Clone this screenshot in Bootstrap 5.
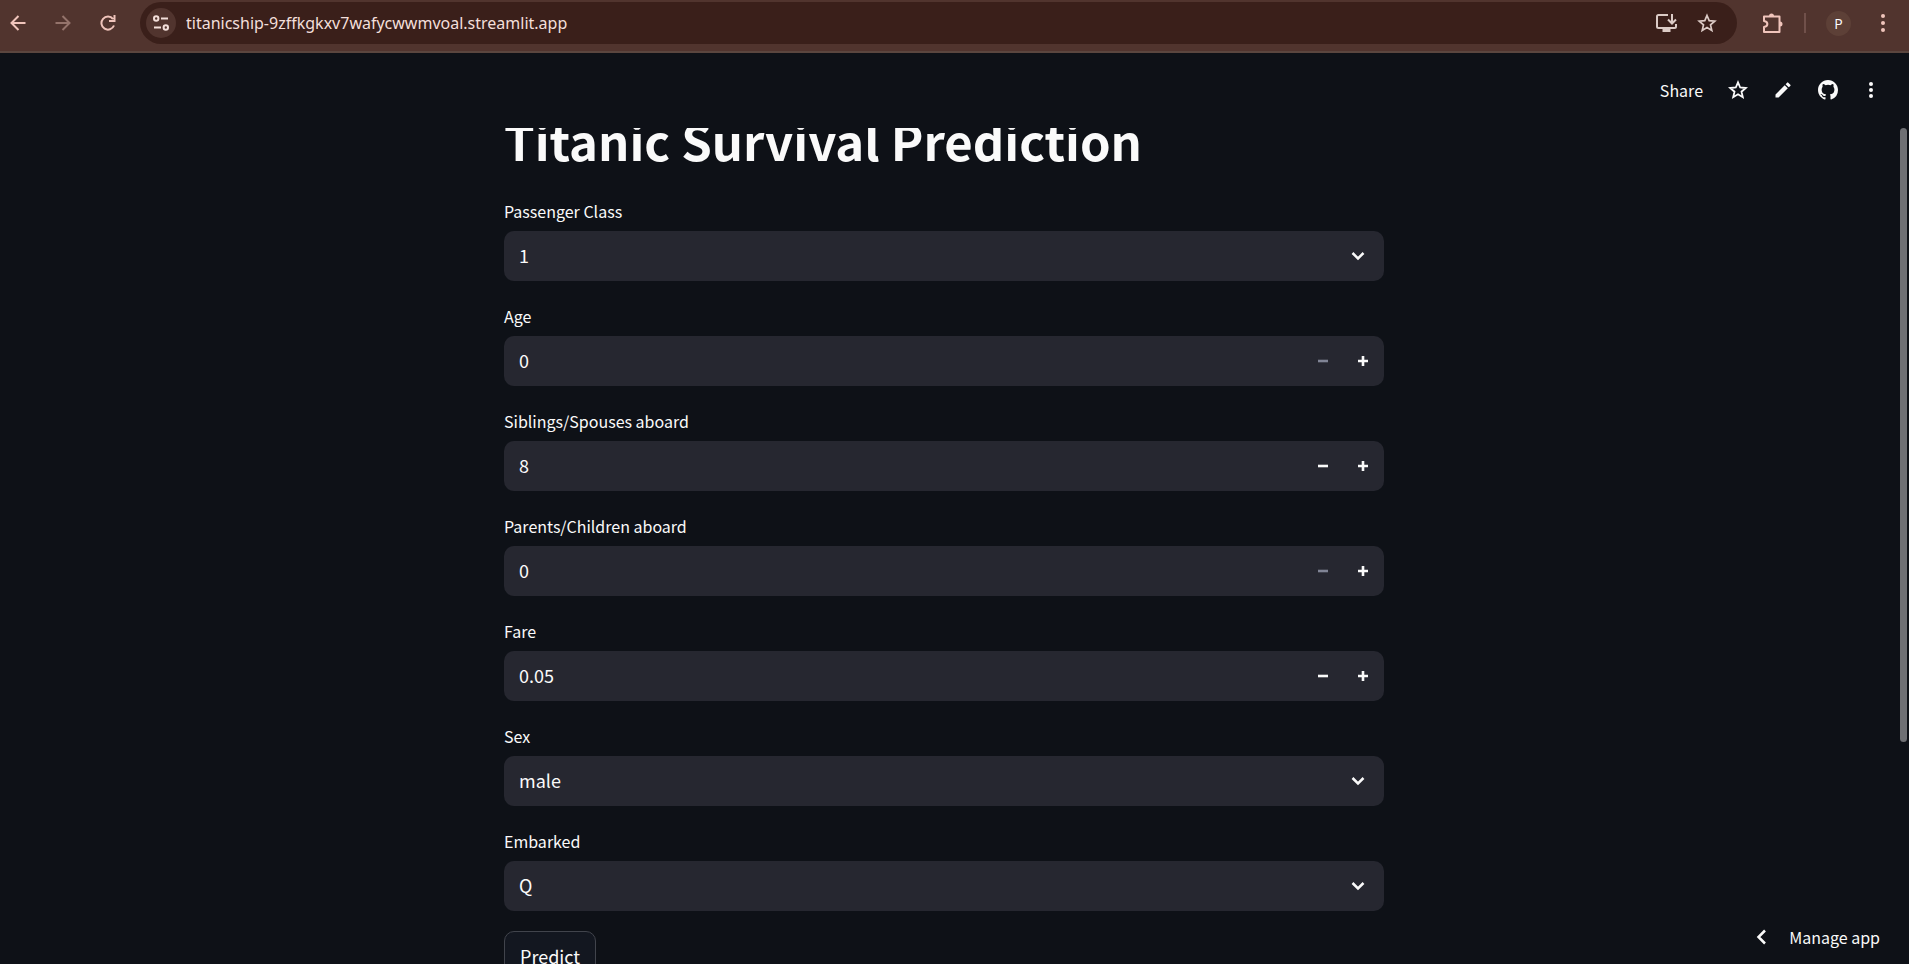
<!DOCTYPE html>
<html lang="en">
<head>
<meta charset="utf-8">
<meta name="viewport" content="width=device-width, initial-scale=1">
<title>Titanic Survival Prediction</title>
<link href="https://cdn.jsdelivr.net/npm/bootstrap@5.3.0/dist/css/bootstrap.min.css" rel="stylesheet">
<style>
  :root { --ink: #fafafa; --page: #0e1117; --field: #262730; --chrome: #51342e; --chrome-ink: #f0c4bb; }
  body { background: var(--page); color: var(--ink); font-family: "Noto Sans CJK SC", "Noto Sans", sans-serif; font-size: 16px; }
  svg { display: block; flex: none; }
  button { color: inherit; }
  .plain-btn { background: none; border: 0; padding: 0; display: flex; align-items: center; justify-content: center; }

  .browser-bar { background: var(--chrome); color: var(--chrome-ink); height: 53px; border-bottom: 2px solid #5b463f; padding: 2px 16px 7px 0; }
  .nav-btn { width: 45px; height: 42px; }
  .nav-btns { padding-right: 10px; margin-left: -5px; }
  .nav-btn:disabled { color: #94736b; }
  .omnibox { background: #3a1f1a; border-radius: 21px; padding: 0 20px 0 6px; height: 42px; color: #dccbc6; }
  .site-info { width: 30px; height: 30px; border-radius: 50%; background: var(--chrome); }
  .address { background: none; border: 0; outline: 0; color: #f3dfda; font-family: "Noto Sans", "Open Sans", sans-serif; font-size: 16px; line-height: 24px; padding: 0; margin-left: 10px; min-width: 0; }
  .box-actions { gap: 20px; }
  .browser-tools { padding-left: 25px; }
  .tool-rule { width: 2px; height: 20px; background: #70504a; margin: 0 20px 0 21px; }
  .profile { width: 25px; height: 25px; border-radius: 50%; background: #5d4037; color: #fff; font-family: "Open Sans", sans-serif; font-size: 14px; line-height: 25px; margin-right: 22px; }

  .app-bar { height: 75px; padding: 0 30px 2px; gap: 25px; }
  .app-bar .share { line-height: 24px; }

  .scroll-area { overflow: hidden; min-height: 0; padding-right: 21px; }
  .form-column { max-width: 880px; margin-top: -20px; gap: 20px; }
  h1 { font-size: 49px; font-weight: 700; line-height: 64px; margin: 0 0 4px; }
  .field-label { font-size: 16px; line-height: 30px; margin-bottom: 5px; }
  .field-box { background: var(--field); border-radius: 10px; height: 50px; padding-right: 1px; }
  .field-box input, .field-box select { background: none; border: 0; outline: 0; color: var(--ink); font-size: 18px; line-height: 30px; padding: 0 0 2px 15px; height: 50px; width: 100%; min-width: 0; appearance: none; }
  .field-box option { background: var(--field); }
  .step { width: 40px; height: 50px; flex: none; }
  .step:disabled { color: #808495; }
  .chevron { right: 18px; top: 50%; margin-top: -8px; pointer-events: none; }
  .predict { border: 1px solid #41444c; border-radius: 10px; background: #131720; color: var(--ink); font-size: 18px; line-height: 30px; padding: 9px 15px; }
  .thumb { top: 0; right: 2px; width: 7px; height: 73.5%; border-radius: 4px; background: #6f7074; }
  .manage { right: 29px; bottom: 15px; gap: 20px; line-height: 24px; }
</style>
</head>
<body>
<div class="d-flex flex-column vh-100 overflow-hidden">
  <header class="browser-bar d-flex align-items-center flex-shrink-0">
    <div class="nav-btns d-flex">
      <button class="plain-btn nav-btn" aria-label="Back"><svg width="16" height="16" viewBox="0 0 16 16" fill="none" stroke="currentColor" stroke-width="2"><path d="M15.500 8H2M8.500 1 1.500 8l7 7"/></svg></button>
      <button class="plain-btn nav-btn" aria-label="Forward" disabled><svg width="16" height="16" viewBox="0 0 16 16" fill="none" stroke="currentColor" stroke-width="2"><path d="M.5 8h14M7.500 1l7 7-7 7"/></svg></button>
      <button class="plain-btn nav-btn" aria-label="Reload"><svg width="16" height="16" viewBox="0 0 16 16" fill="none" stroke="currentColor" stroke-width="2"><path d="M14 10.500A6.500 6.500 0 1 1 13 4M14.500 0v6H9"/></svg></button>
    </div>
    <div class="omnibox d-flex align-items-center flex-grow-1">
      <button class="plain-btn site-info" aria-label="Site information"><svg width="16" height="16" viewBox="0 0 16 16" fill="none" stroke="#f3dfda" stroke-width="2"><circle cx="3.200" cy="3.500" r="2.200"/><path d="M8 3.500h7M1 12.500h7"/><circle cx="12.800" cy="12.500" r="2.200"/></svg></button>
      <input class="address flex-grow-1" type="text" aria-label="Address" value="titanicship-9zffkgkxv7wafycwwmvoal.streamlit.app">
      <div class="box-actions d-flex align-items-center">
        <button class="plain-btn" aria-label="Install app"><svg width="21" height="20" viewBox="0 0 21 20" fill="none" stroke="currentColor" stroke-width="2"><path d="M12 2H2.500Q1 2 1 3.500v10Q1 15 2.500 15h16q1.500 0 1.500-1.500V11M16 1v9M12 6.500l4 4 4-4"/><path d="M6.500 16h8v3h-8z" fill="currentColor" stroke="none"/></svg></button>
        <button class="plain-btn" aria-label="Bookmark"><svg width="20" height="20" viewBox="0 0 20 20" fill="none" stroke="currentColor" stroke-width="1.700"><path d="m10 2.500 2.200 5.200 5.600.500-4.300 3.700 1.300 5.500-4.800-2.900-4.800 2.900 1.300-5.500L2.200 8.200l5.600-.500z"/></svg></button>
      </div>
    </div>
    <div class="browser-tools d-flex align-items-center">
      <button class="plain-btn" aria-label="Extensions"><svg width="21" height="21" viewBox="0 0 21 21" fill="none" stroke="currentColor" stroke-width="2"><path d="M2 3.500h15.500v15.500H2v-5c4.500-.500 4.500-5.500 0-6z" stroke-linejoin="round"/><path d="M7 3a2.500 2.500 0 0 1 5 0zM18 8.500a2.500 2.500 0 0 1 0 5z" fill="currentColor" stroke="none"/></svg></button>
      <span class="tool-rule"></span>
      <button class="plain-btn profile" aria-label="Profile P">P</button>
      <button class="plain-btn" aria-label="Browser menu"><svg width="20" height="20" viewBox="0 0 20 20" fill="currentColor"><circle cx="10" cy="3" r="2"/><circle cx="10" cy="10" r="2"/><circle cx="10" cy="17" r="2"/></svg></button>
    </div>
  </header>

  <nav class="app-bar d-flex align-items-center justify-content-end flex-shrink-0" aria-label="App toolbar">
    <button class="plain-btn share">Share</button>
    <button class="plain-btn" aria-label="Favorite"><svg width="20" height="20" viewBox="0 0 20 20" fill="none" stroke="currentColor" stroke-width="1.800"><path d="m10 2.300 2.200 5.200 5.600.500-4.300 3.700 1.300 5.500-4.800-2.900-4.800 2.900 1.300-5.500L2.200 8l5.600-.500z"/></svg></button>
    <button class="plain-btn" aria-label="Edit source"><svg width="20" height="20" viewBox="0 0 20 20" fill="currentColor"><path d="M2.500 14.400v3.100h3.100l9.200-9.200-3.100-3.100zM17.300 5.900a.8.8 0 0 0 0-1.200l-2-2a.8.8 0 0 0-1.200 0l-1.500 1.500 3.100 3.100z"/></svg></button>
    <button class="plain-btn" aria-label="View on GitHub"><svg width="20" height="20" viewBox="0 0 16 16" fill="currentColor"><path d="M8 0C3.580 0 0 3.580 0 8c0 3.540 2.290 6.530 5.470 7.590.4.070.55-.17.55-.38 0-.19-.01-.82-.01-1.490-2.010.37-2.530-.49-2.690-.94-.09-.23-.48-.94-.82-1.130-.28-.15-.68-.52-.01-.53.63-.01 1.080.58 1.230.82.72 1.210 1.870.87 2.330.66.07-.52.28-.87.51-1.070-1.780-.2-3.640-.89-3.640-3.950 0-.87.31-1.590.82-2.150-.08-.2-.36-1.020.08-2.120 0 0 .67-.21 2.200.82a7.600 7.600 0 0 1 4 0c1.530-1.040 2.200-.82 2.200-.82.44 1.100.16 1.920.08 2.120.51.56.82 1.270.82 2.150 0 3.070-1.870 3.750-3.650 3.950.29.25.54.73.54 1.480 0 1.070-.01 1.930-.01 2.200 0 .21.15.46.55.38A8.010 8.010 0 0 0 16 8c0-4.420-3.580-8-8-8"/></svg></button>
    <button class="plain-btn" aria-label="Main menu"><svg width="16" height="20" viewBox="0 0 16 20" fill="currentColor"><circle cx="8" cy="4" r="2"/><circle cx="8" cy="10" r="2"/><circle cx="8" cy="16" r="2"/></svg></button>
  </nav>

  <div class="position-relative d-flex flex-column flex-grow-1 overflow-hidden">
    <main class="scroll-area flex-grow-1">
      <form class="form-column d-flex flex-column mx-auto">
        <h1>Titanic Survival Prediction</h1>
        <div>
          <label class="field-label d-block" for="pclass">Passenger Class</label>
          <div class="field-box position-relative"><select id="pclass"><option>1</option><option>2</option><option>3</option></select>
            <svg class="chevron position-absolute" width="16" height="16" viewBox="0 0 16 16" fill="none" stroke="currentColor" stroke-width="2.500"><path d="m2.500 5 5.500 5.500L13.500 5"/></svg></div>
        </div>
        <div>
          <label class="field-label d-block" for="age">Age</label>
          <div class="field-box d-flex"><input id="age" type="text" inputmode="numeric" value="0">
            <button type="button" class="plain-btn step" aria-label="Decrease age" disabled><svg width="10" height="10" viewBox="0 0 10 10"><path fill="currentColor" d="M0 3.700h10v2.600H0z"/></svg></button>
            <button type="button" class="plain-btn step" aria-label="Increase age"><svg width="10" height="10" viewBox="0 0 10 10"><path fill="currentColor" d="M0 3.700h3.700V0h2.600v3.700H10v2.600H6.300V10H3.700V6.300H0z"/></svg></button></div>
        </div>
        <div>
          <label class="field-label d-block" for="sibsp">Siblings/Spouses aboard</label>
          <div class="field-box d-flex"><input id="sibsp" type="text" inputmode="numeric" value="8">
            <button type="button" class="plain-btn step" aria-label="Decrease siblings"><svg width="10" height="10" viewBox="0 0 10 10"><path fill="currentColor" d="M0 3.700h10v2.600H0z"/></svg></button>
            <button type="button" class="plain-btn step" aria-label="Increase siblings"><svg width="10" height="10" viewBox="0 0 10 10"><path fill="currentColor" d="M0 3.700h3.700V0h2.600v3.700H10v2.600H6.300V10H3.700V6.300H0z"/></svg></button></div>
        </div>
        <div>
          <label class="field-label d-block" for="parch">Parents/Children aboard</label>
          <div class="field-box d-flex"><input id="parch" type="text" inputmode="numeric" value="0">
            <button type="button" class="plain-btn step" aria-label="Decrease parents" disabled><svg width="10" height="10" viewBox="0 0 10 10"><path fill="currentColor" d="M0 3.700h10v2.600H0z"/></svg></button>
            <button type="button" class="plain-btn step" aria-label="Increase parents"><svg width="10" height="10" viewBox="0 0 10 10"><path fill="currentColor" d="M0 3.700h3.700V0h2.600v3.700H10v2.600H6.300V10H3.700V6.300H0z"/></svg></button></div>
        </div>
        <div>
          <label class="field-label d-block" for="fare">Fare</label>
          <div class="field-box d-flex"><input id="fare" type="text" inputmode="decimal" value="0.05">
            <button type="button" class="plain-btn step" aria-label="Decrease fare"><svg width="10" height="10" viewBox="0 0 10 10"><path fill="currentColor" d="M0 3.700h10v2.600H0z"/></svg></button>
            <button type="button" class="plain-btn step" aria-label="Increase fare"><svg width="10" height="10" viewBox="0 0 10 10"><path fill="currentColor" d="M0 3.700h3.700V0h2.600v3.700H10v2.600H6.300V10H3.700V6.300H0z"/></svg></button></div>
        </div>
        <div>
          <label class="field-label d-block" for="sex">Sex</label>
          <div class="field-box position-relative"><select id="sex"><option>male</option><option>female</option></select>
            <svg class="chevron position-absolute" width="16" height="16" viewBox="0 0 16 16" fill="none" stroke="currentColor" stroke-width="2.500"><path d="m2.500 5 5.500 5.500L13.500 5"/></svg></div>
        </div>
        <div>
          <label class="field-label d-block" for="embarked">Embarked</label>
          <div class="field-box position-relative"><select id="embarked"><option>Q</option><option>S</option><option>C</option></select>
            <svg class="chevron position-absolute" width="16" height="16" viewBox="0 0 16 16" fill="none" stroke="currentColor" stroke-width="2.500"><path d="m2.500 5 5.500 5.500L13.500 5"/></svg></div>
        </div>
        <button type="button" class="predict align-self-start">Predict</button>
      </form>
    </main>
    <div class="thumb position-absolute" aria-hidden="true"></div>
    <button class="plain-btn manage position-absolute"><svg width="16" height="16" viewBox="0 0 16 16" fill="none" stroke="currentColor" stroke-width="2.500"><path d="M12 1.500 5.500 8l6.500 6.500"/></svg>Manage app</button>
  </div>
</div>
<script src="https://cdn.jsdelivr.net/npm/bootstrap@5.3.0/dist/js/bootstrap.bundle.min.js"></script>
</body>
</html>
